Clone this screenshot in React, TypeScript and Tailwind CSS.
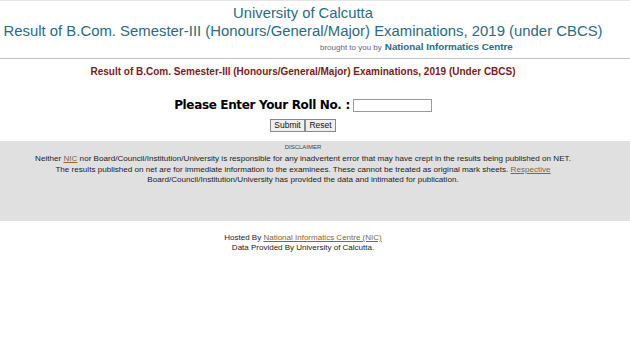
import React from 'react';

const linkCls = 'underline text-[#8b6433]';

const App: React.FC = () => {
  return (
    <div className="w-[630px] h-[354px] bg-white font-['Liberation_Sans',Arial,sans-serif] overflow-hidden">
      {/* Header */}
      <div className="border-t border-[#e6e6e6] pt-[3px]">
        <div className="w-[606px]">
          <div className="text-center text-[#2c6a82] text-[14.8px] leading-[18px]">University of Calcutta</div>
          <div className="text-center text-[#2c6a82] text-[14.9px] leading-[18px] whitespace-nowrap">
            Result of B.Com. Semester-III (Honours/General/Major) Examinations, 2019 (under CBCS)
          </div>
          <div className="flex items-baseline pl-[320px] h-[14px]">
            <span className="text-[#666] text-[8px]">brought to you by</span>
            <span className="ml-[3px] text-[#2c6a82] text-[9.8px] font-bold">National Informatics Centre</span>
          </div>
        </div>
      </div>
      <div className="mt-[4px] border-t border-[#c4c4c4]"></div>

      <div className="w-[606px] pt-[7px] text-center text-[#7a1a1a] text-[10px] font-bold leading-[12px]">
        Result of B.Com. Semester-III (Honours/General/Major) Examinations, 2019 (Under CBCS)
      </div>

      {/* Roll no form */}
      <div className="w-[606px] mt-[18px] flex items-center justify-center gap-[3px]">
        <span className="font-['DejaVu_Sans',Verdana,sans-serif] font-bold text-[12px] tracking-[-0.35px] text-black">
          Please Enter Your Roll No. :
        </span>
        <input type="text" className="w-[79px] h-[13px] border border-[#999] bg-white" />
      </div>
      <div className="w-[606px] mt-[5px] flex justify-center">
        <button className="w-[35px] h-[13px] text-[8.5px] border border-[#888] bg-[#efefef] leading-none text-[#111]">
          Submit
        </button>
        <button className="w-[31px] h-[13px] text-[8.5px] border border-[#888] bg-[#efefef] leading-none text-[#111]">
          Reset
        </button>
      </div>

      {/* Disclaimer */}
      <div className="mt-[9px] h-[80px] bg-[#e0e0e0] text-[#222]">
        <div className="w-[606px] text-center">
          <div className="pt-[2px] text-[6px] leading-[8px] text-[#444]">DISCLAIMER</div>
          <div className="pt-[3px] text-[8.1px] leading-[10.5px]">
            Neither <a className={linkCls}>NIC</a> nor Board/Council/Institution/University is responsible for any
            inadvertent error that may have crept in the results being published on NET.
            <br />
            The results published on net are for immediate information to the examinees. These cannot be treated as
            original mark sheets. <a className={linkCls}>Respective</a>
            <br />
            Board/Council/Institution/University has provided the data and intimated for publication.
          </div>
        </div>
      </div>

      {/* Footer */}
      <div className="w-[606px] pt-[12px] text-center text-[8px] leading-[9.5px] text-[#222]">
        <div>
          Hosted By <a className={linkCls}>National Informatics Centre (NIC)</a>
        </div>
        <div>Data Provided By University of Calcutta.</div>
      </div>
    </div>
  );
};

export default App;
